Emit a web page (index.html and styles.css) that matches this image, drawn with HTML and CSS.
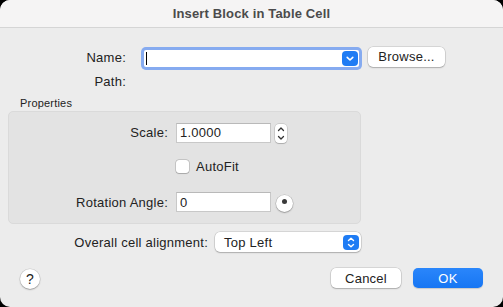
FILE: index.html
```html
<!DOCTYPE html>
<html lang="en">
<head>
  <meta charset="UTF-8" />
  <title>Insert Block in Table Cell</title>
  <link rel="stylesheet" href="styles.css">
</head>
<body>
  <div class="dialog">
    <div class="titlebar">Insert Block in Table Cell</div>

    <div class="content">
      <!-- block name -->
      <div class="row name-row">
        <label class="top-label">Name:</label>
        <div class="combo">
          <span class="caret"></span>
          <span class="combo-btn">
            <svg width="16" height="15" viewBox="0 0 16 15"><path d="M5.2 6.3 L8 9 L10.8 6.3" fill="none" stroke="#fff" stroke-width="1.6" stroke-linecap="round" stroke-linejoin="round"/></svg>
          </span>
        </div>
        <button class="btn browse-btn">Browse...</button>
      </div>
      <div class="row path-row">
        <label class="top-label">Path:</label>
      </div>

      <div class="group-title">Properties</div>
      <div class="group">
        <div class="grow">
          <label class="group-label">Scale:</label>
          <input class="text-field" type="text" value="1.0000">
          <span class="stepper">
            <svg width="12" height="19" viewBox="0 0 12 19"><path d="M3.5 6.5 L6 4 L8.5 6.5" fill="none" stroke="#333" stroke-width="1.3" stroke-linecap="round" stroke-linejoin="round"/><path d="M3.5 12.5 L6 15 L8.5 12.5" fill="none" stroke="#333" stroke-width="1.3" stroke-linecap="round" stroke-linejoin="round"/></svg>
          </span>
        </div>
        <div class="grow autofit-row">
          <span></span>
          <label class="check"><span class="box"></span>AutoFit</label>
        </div>
        <div class="grow rotation-row">
          <label class="group-label">Rotation Angle:</label>
          <input class="text-field" type="text" value="0">
          <span class="dial"><span class="dot"></span></span>
        </div>
      </div>

      <div class="row align-row">
        <label class="align-label">Overall cell alignment:</label>
        <div class="popup">
          <span>Top Left</span>
          <span class="combo-btn">
            <svg width="16" height="15" viewBox="0 0 16 15"><path d="M5.5 5.6 L8 3.3 L10.5 5.6" fill="none" stroke="#fff" stroke-width="1.4" stroke-linecap="round" stroke-linejoin="round"/><path d="M5.5 9.4 L8 11.7 L10.5 9.4" fill="none" stroke="#fff" stroke-width="1.4" stroke-linecap="round" stroke-linejoin="round"/></svg>
          </span>
        </div>
      </div>

      <div class="row footer">
        <button class="help-btn">?</button>
        <div class="actions">
          <button class="btn">Cancel</button>
          <button class="btn ok-btn">OK</button>
        </div>
      </div>
    </div>
  </div>
</body>
</html>
```

FILE: styles.css
```css
body {
  margin: 0;
  background: #000;
  font-family: "Liberation Sans", Arial, sans-serif;
  font-size: 13px;
  letter-spacing: 0.25px;
  color: #222;
}

.dialog {
  width: 503px;
  height: 307px;
  background: #ececec;
  border-radius: 10px;
  overflow: hidden;
}

.titlebar {
  height: 27px;
  line-height: 28px;
  border-bottom: 1px solid #d5d5d5;
  background: #f5f4f4;
  text-align: center;
  font-weight: bold;
  letter-spacing: 0.15px;
  color: #4b4b4b;
}

.row {
  display: flex;
  align-items: center;
}

.name-row {
  margin-top: 19px;
  height: 20px;
}

.top-label {
  width: 126px;
  text-align: right;
}

.combo {
  position: relative;
  margin-left: 18px;
  margin-top: 3px;
  width: 215px;
  height: 17px;
  background: #fff;
  border-radius: 2px;
  box-shadow: 0 0 0 3px #86abf0;
  display: flex;
  align-items: center;
  justify-content: space-between;
}

.caret {
  width: 1px;
  height: 13px;
  margin-left: 2px;
  background: #000;
}

.combo-btn {
  width: 16px;
  height: 15px;
  margin-right: 1px;
  border-radius: 4px;
  background: #1f7cf4;
  display: flex;
}

.btn {
  font-family: inherit;
  font-size: 13px;
  letter-spacing: inherit;
  color: #222;
  height: 20px;
  padding: 0;
  background: #fff;
  border: none;
  border-radius: 5px;
  box-shadow: 0 0 0 0.5px rgba(0, 0, 0, 0.18), 0 1px 1.5px rgba(0, 0, 0, 0.2);
}

.browse-btn {
  width: 77px;
  margin-left: 9px;
  margin-top: -1px;
}

.path-row {
  margin-top: 6px;
  height: 16px;
}

.group-title {
  margin: 8px 0 0 20px;
  font-size: 11px;
  line-height: 13px;
  letter-spacing: 0.2px;
}

.group {
  margin: 1px 0 0 8px;
  width: 353px;
  height: 113px;
  box-sizing: border-box;
  padding-top: 10px;
  background: #e3e3e3;
  border: 1px solid #dadada;
  border-radius: 5px;
}

.grow {
  display: grid;
  grid-template-columns: 159px 95px auto;
  column-gap: 8px;
  align-items: center;
  height: 20px;
}

.group-label {
  text-align: right;
}

.text-field {
  box-sizing: border-box;
  width: 95px;
  height: 20px;
  margin: 0;
  padding: 0 3px;
  border: 1px solid #c8c8c8;
  border-top-color: #b9b9b9;
  background: #fff;
  font-family: inherit;
  font-size: 13px;
  letter-spacing: inherit;
  color: #222;
  outline: none;
}

.stepper {
  margin-left: -4px;
  margin-top: 2px;
  width: 12px;
  height: 19px;
  background: #fff;
  border-radius: 4px;
  box-shadow: 0 0 0 0.5px rgba(0, 0, 0, 0.2), 0 1px 1px rgba(0, 0, 0, 0.15);
  display: flex;
}

.autofit-row {
  margin-top: 14px;
}

.check {
  display: flex;
  align-items: center;
  grid-column: 2 / 4;
  white-space: nowrap;
}

.box {
  width: 13px;
  height: 13px;
  margin-right: 7px;
  background: #fff;
  border-radius: 3px;
  box-shadow: 0 0 0 0.5px rgba(0, 0, 0, 0.25), 0 0.5px 1px rgba(0, 0, 0, 0.15);
}

.rotation-row {
  margin-top: 16px;
}

.dial {
  margin-left: -3px;
  margin-top: 2px;
  width: 17px;
  height: 17px;
  border-radius: 50%;
  background: #fff;
  box-shadow: 0 0 0 0.5px rgba(0, 0, 0, 0.2), 0 1px 1.5px rgba(0, 0, 0, 0.25);
  display: flex;
  justify-content: center;
}

.dot {
  width: 5px;
  height: 5px;
  margin-top: 4px;
  border-radius: 50%;
  background: #3a3a3a;
}

.align-row {
  margin-top: 8px;
  height: 20px;
}

.align-label {
  width: 208px;
  text-align: right;
}

.popup {
  margin-left: 7px;
  width: 146px;
  height: 20px;
  box-sizing: border-box;
  padding-left: 9px;
  background: #fff;
  border-radius: 5px;
  box-shadow: 0 0 0 0.5px rgba(0, 0, 0, 0.18), 0 1px 1.5px rgba(0, 0, 0, 0.2);
  display: flex;
  align-items: center;
  justify-content: space-between;
}

.popup .combo-btn {
  margin-right: 2px;
}

.footer {
  margin-top: 16px;
  height: 20px;
  padding: 0 20px;
  justify-content: space-between;
}

.help-btn {
  width: 20px;
  height: 20px;
  margin-top: 2px;
  padding: 0;
  border: none;
  border-radius: 50%;
  background: #fff;
  box-shadow: 0 0 0 0.5px rgba(0, 0, 0, 0.15), 0 1px 1.5px rgba(0, 0, 0, 0.25);
  font-family: inherit;
  font-size: 14px;
  color: #222;
}

.actions {
  display: flex;
  gap: 12px;
}

.actions .btn {
  width: 70px;
}

.actions .ok-btn {
  background: linear-gradient(#2a86fb, #1776f3);
  color: #fff;
  box-shadow: 0 1px 1px rgba(0, 0, 0, 0.15);
}
```
